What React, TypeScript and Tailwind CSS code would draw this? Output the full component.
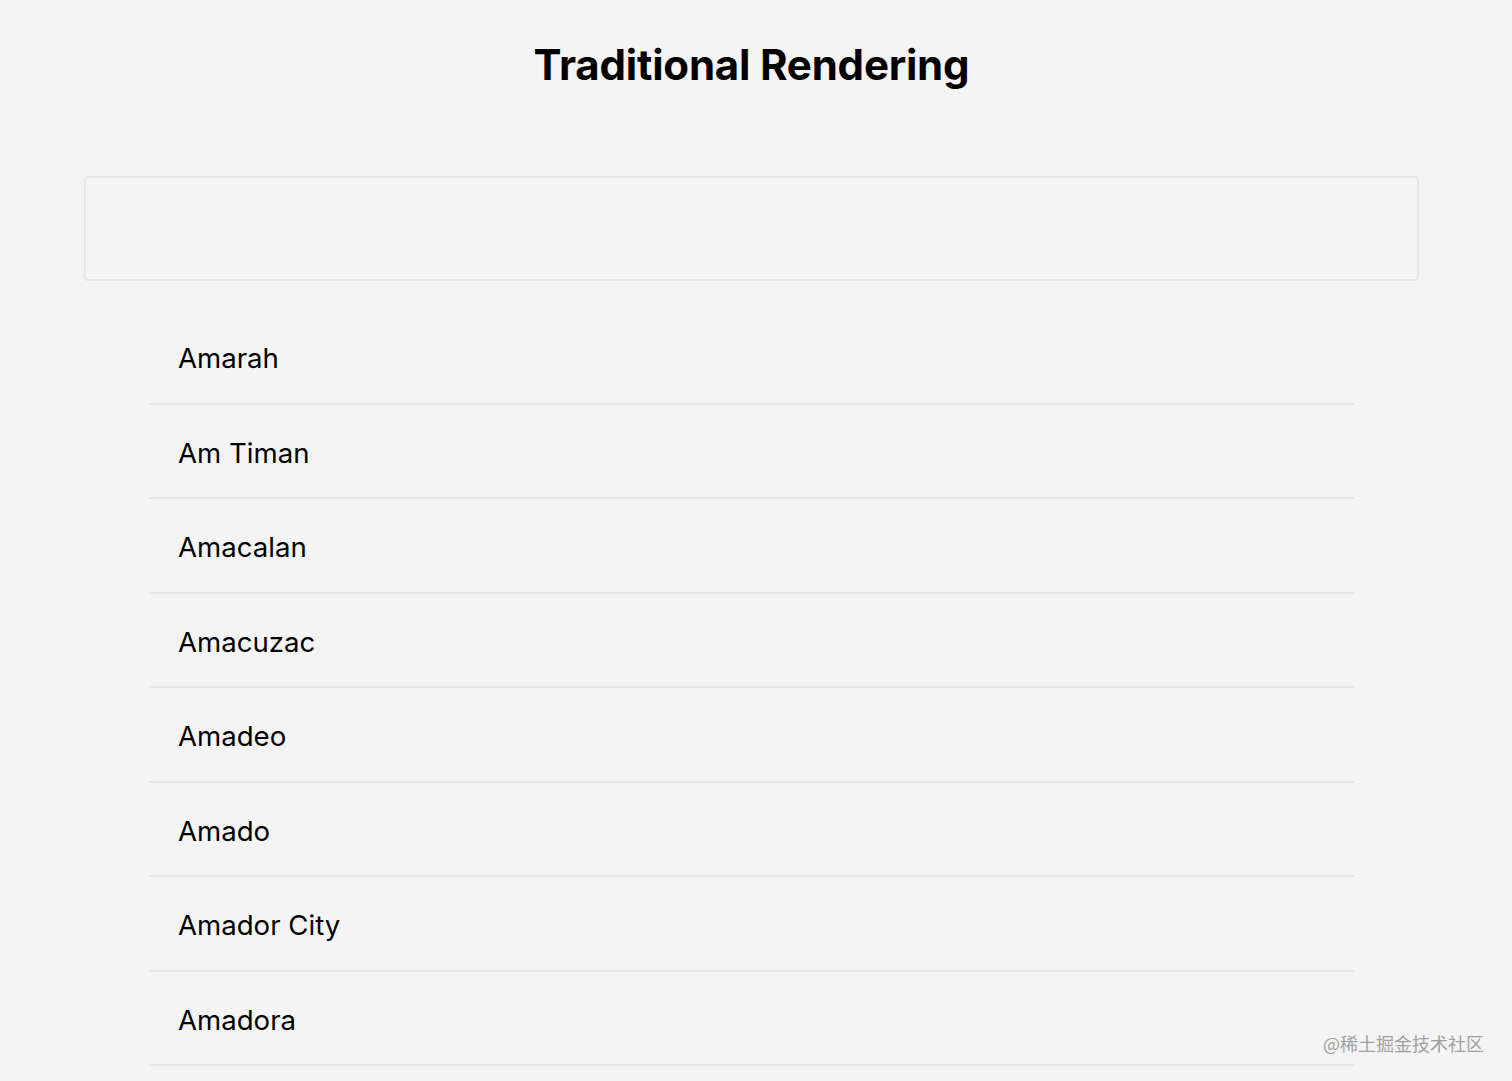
const cities = ["Amarah", "Am Timan", "Amacalan", "Amacuzac", "Amadeo", "Amado", "Amador City", "Amadora"];

export default function App() {
  return (
    <div className="relative h-[1081px] overflow-hidden bg-[#f4f4f4] font-['Inter',sans-serif] text-black">
      <div className="w-[1503px]">
        <h1 className="pt-[35px] text-center text-[42px] font-bold leading-[60px] tracking-[-0.2px]">Traditional Rendering</h1>
        <div className="mx-[84px] mt-[81px] h-[105px] rounded-[4px] border-2 border-[#e6e6e6] bg-[#f5f5f5]" />
        <ul className="mx-[149px] mt-[29px]">
          {cities.map((name) => (
            <li key={name} className="flex h-[94.5px] items-center border-b-2 border-[#e6e6e6] pl-[29px] pt-[5px] text-[27.6px]">
              {name}
            </li>
          ))}
        </ul>
      </div>
      <div className="absolute right-[28px] top-[1030px] font-['Noto_Sans_CJK_SC',sans-serif] text-[18px] text-[#a0a0a0]">@稀土掘金技术社区</div>
    </div>
  );
}
